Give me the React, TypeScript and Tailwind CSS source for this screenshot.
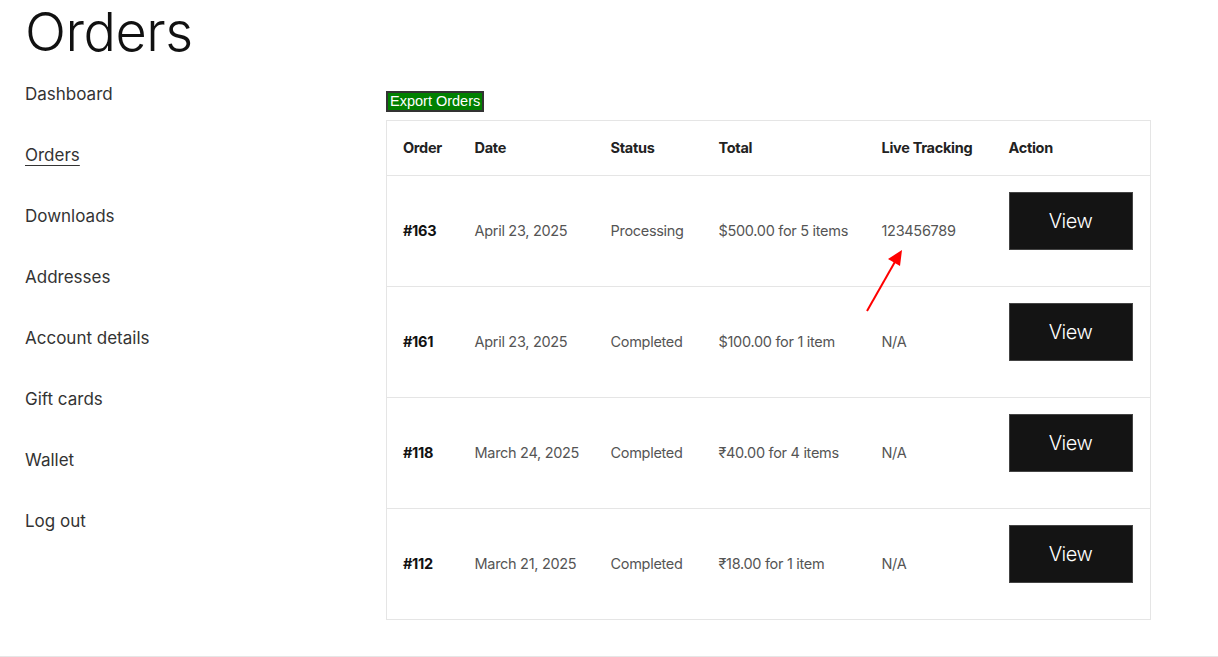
import React from "react";

type Order = {
  id: string;
  date: string;
  status: string;
  total: string;
  tracking: string;
};

const orders: Order[] = [
  { id: "#163", date: "April 23, 2025", status: "Processing", total: "$500.00 for 5 items", tracking: "123456789" },
  { id: "#161", date: "April 23, 2025", status: "Completed", total: "$100.00 for 1 item", tracking: "N/A" },
  { id: "#118", date: "March 24, 2025", status: "Completed", total: "₹40.00 for 4 items", tracking: "N/A" },
  { id: "#112", date: "March 21, 2025", status: "Completed", total: "₹18.00 for 1 item", tracking: "N/A" },
];

const navItems = [
  "Dashboard",
  "Orders",
  "Downloads",
  "Addresses",
  "Account details",
  "Gift cards",
  "Wallet",
  "Log out",
];

export default function App() {
  return (
    <div className="relative bg-white font-['Inter',sans-serif] text-[#333]">
      <div className="h-[657px] pl-[25px] border-b border-[#e6e6e6]">
        <h1 className="h-[64px] text-[54px] leading-[64px] font-light tracking-[-0.5px] text-[#111]">Orders</h1>

        <div className="flex">
          {/* account nav */}
          <nav className="w-[361px] shrink-0">
            <ul>
              {navItems.map((item) => (
                <li key={item} className="h-[61px] flex items-center">
                  <a
                    href="#"
                    className={
                      "text-[17px] text-[#333] " +
                      (item === "Orders" ? "underline underline-offset-[4px] decoration-1" : "")
                    }
                  >
                    {item}
                  </a>
                </li>
              ))}
            </ul>
          </nav>

          {/* orders */}
          <div className="w-[765px] pt-[24px]">
            <button className="h-[21px] px-[2px] bg-[#008000] border-2 border-[#333] text-white text-[14.5px] leading-[16px] font-['Liberation_Sans',sans-serif]">
              Export Orders
            </button>

            <table className="mt-[8px] w-full table-fixed border border-[#e5e5e5] border-collapse text-[14.5px] leading-[20px] tracking-[-0.3px]">
              <thead>
                <tr className="h-[55px] border-b border-[#e5e5e5] text-left text-[#222]">
                  <th className="w-[88px] pl-4 font-bold">Order</th>
                  <th className="w-[136px] font-bold">Date</th>
                  <th className="w-[108px] font-bold">Status</th>
                  <th className="w-[163px] font-bold">Total</th>
                  <th className="w-[127px] font-bold">Live Tracking</th>
                  <th className="font-bold">Action</th>
                </tr>
              </thead>
              <tbody>
                {orders.map((o) => (
                  <tr key={o.id} className="h-[111px] border-b border-[#e5e5e5] text-[#555]">
                    <td className="pl-4 font-bold text-[#111]">{o.id}</td>
                    <td>{o.date}</td>
                    <td>{o.status}</td>
                    <td>{o.total}</td>
                    <td>{o.tracking}</td>
                    <td>
                      <button className="block mb-[20px] w-[124px] h-[58px] bg-[#141414] border border-[#444] text-white text-[20px] font-light tracking-[-0.5px]">
                        View
                      </button>
                    </td>
                  </tr>
                ))}
              </tbody>
            </table>
          </div>
        </div>
      </div>

      {/* annotation arrow */}
      <svg className="absolute left-[860px] top-[244px]" width="50" height="72" viewBox="0 0 50 72">
        <line x1="7" y1="67" x2="36" y2="16" stroke="#ff0000" strokeWidth="2" />
        <polygon points="42,6 40,22 28,15" fill="#ff0000" />
      </svg>
    </div>
  );
}
